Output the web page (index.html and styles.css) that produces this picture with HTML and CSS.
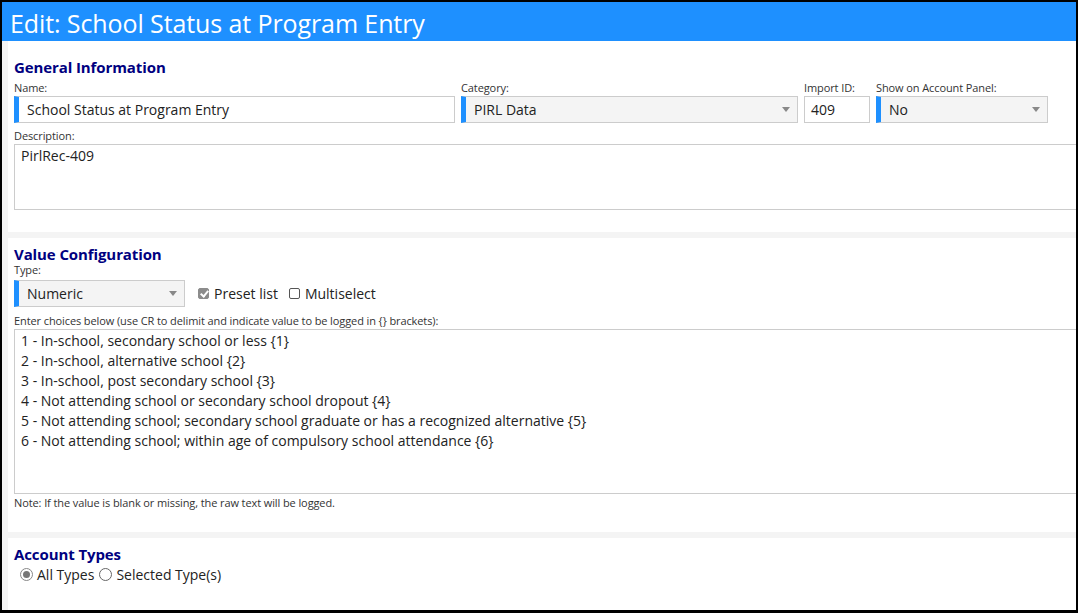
FILE: index.html
```html
<!DOCTYPE html>
<html lang="en">
<head>
  <meta charset="UTF-8">
  <title>Edit: School Status at Program Entry</title>
  <link rel="stylesheet" href="styles.css">
</head>
<body>
  <div class="window">
    <div class="titlebar">Edit: School Status at Program Entry</div>

    <div class="content">
      <div class="panel panel-general">
        <h2>General Information</h2>
        <div class="row">
          <div class="field f-name">
            <label>Name:</label>
            <div class="input req">School Status at Program Entry</div>
          </div>
          <div class="field f-category">
            <label>Category:</label>
            <div class="select req">PIRL Data<span class="arrow"></span></div>
          </div>
          <div class="field f-import">
            <label>Import ID:</label>
            <div class="input plain">409</div>
          </div>
          <div class="field f-show">
            <label>Show on Account Panel:</label>
            <div class="select req">No<span class="arrow"></span></div>
          </div>
        </div>
        <label>Description:</label>
        <div class="textarea desc">PirlRec-409</div>
      </div>

      <div class="panel panel-value">
        <h2>Value Configuration</h2>
        <label>Type:</label>
        <div class="type-row">
          <div class="select req f-type">Numeric<span class="arrow"></span></div>
          <span class="check on"></span><span class="opt">Preset list</span>
          <span class="check"></span><span class="opt">Multiselect</span>
        </div>
        <label>Enter choices below (use CR to delimit and indicate value to be logged in {} brackets):</label>
        <div class="textarea choices">1 - In-school, secondary school or less {1}
2 - In-school, alternative school {2}
3 - In-school, post secondary school {3}
4 - Not attending school or secondary school dropout {4}
5 - Not attending school; secondary school graduate or has a recognized alternative {5}
6 - Not attending school; within age of compulsory school attendance {6}</div>
        <div class="note">Note: If the value is blank or missing, the raw text will be logged.</div>
      </div>

      <div class="panel panel-types">
        <h2>Account Types</h2>
        <div class="radio-row">
          <span class="radio on"></span><span class="opt">All Types</span>
          <span class="radio"></span><span class="opt">Selected Type(s)</span>
        </div>
      </div>
    </div>
  </div>
</body>
</html>
```

FILE: styles.css
```css
html, body { margin: 0; padding: 0; background: #000; }
body { font-family: "Open Sans", "Noto Sans", sans-serif; color: #222; }

.window { width: 1078px; height: 613px; box-sizing: border-box; border: 2px solid #000; border-bottom-width: 3px; background: #f4f4f4; overflow: hidden; display: flex; flex-direction: column; }

.titlebar { height: 39px; flex: none; background: #1e90ff; color: #fff; font-size: 25px; line-height: 43px; padding-left: 8px; letter-spacing: -0.1px; }

.content { flex: 1; padding-left: 6px; display: flex; flex-direction: column; gap: 6px; overflow: hidden; }

.panel { background: #fff; padding: 0 0 0 6px; overflow: hidden; }
.panel h2 { margin: 0; font-size: 15px; font-weight: bold; color: #000080; line-height: 18px; letter-spacing: -0.1px; }
.panel label { display: block; font-size: 11px; line-height: 13px; color: #333; letter-spacing: -0.1px; }

.panel-general { height: 191px; padding-top: 17px; box-sizing: border-box; }
.panel-value { height: 294px; padding-top: 7px; box-sizing: border-box; }
.panel-types { flex: 1; padding-top: 7px; }

.row { display: flex; gap: 6px; margin-top: 5px; margin-bottom: 6px; }
.field label { margin-bottom: 2px; }
.f-name { width: 441px; }
.f-category { width: 337px; }
.f-import { width: 66px; }
.f-show { width: 172px; }

.input, .select { height: 27px; box-sizing: border-box; border: 1px solid #ccc; font-size: 14px; line-height: 25px; padding-left: 8px; position: relative; }
.input.plain { padding-left: 6px; }
.select { background: #f4f4f4; }
.req { border-left: 5px solid #1e90ff; }
.select .arrow { position: absolute; right: 7px; top: 10px; width: 0; height: 0; border-left: 4px solid transparent; border-right: 4px solid transparent; border-top: 5px solid #888; }

.textarea { border: 1px solid #ccc; box-sizing: border-box; width: calc(100% + 20px); font-size: 14px; white-space: pre; padding-left: 6px; }
.desc { height: 66px; margin-top: 2px; line-height: 22px; }

.type-row { display: flex; align-items: center; margin-top: 3px; margin-bottom: 7px; }
.f-type { width: 171px; margin-top: 1px; }
.opt { font-size: 14px; color: #222; }
.check { width: 11px; height: 11px; box-sizing: border-box; border: 1px solid #555; border-radius: 2px; margin: 0 5px 0 11px; position: relative; }
.check.on { background: #8c8c8c; border-color: #8c8c8c; margin-left: 13px; }
.check.on::after { content: ""; position: absolute; left: 3px; top: 0px; width: 3px; height: 6px; border: solid #fff; border-width: 0 2px 2px 0; transform: rotate(40deg); }

.choices { height: 165px; margin-top: 2px; line-height: 20px; padding-top: 1px; }
.note { font-size: 11px; color: #333; margin-top: 1px; letter-spacing: -0.1px; }

.radio-row { display: flex; align-items: center; margin-top: 2px; margin-left: 6px; }
.radio { width: 13px; height: 13px; box-sizing: border-box; border: 1px solid #666; border-radius: 50%; margin-right: 4px; position: relative; }
.radio.on { border-color: #888; }
.radio.on::after { content: ""; position: absolute; left: 2px; top: 2px; width: 7px; height: 7px; border-radius: 50%; background: #777; }
.radio-row .opt + .radio { margin-left: 5px; }
```
